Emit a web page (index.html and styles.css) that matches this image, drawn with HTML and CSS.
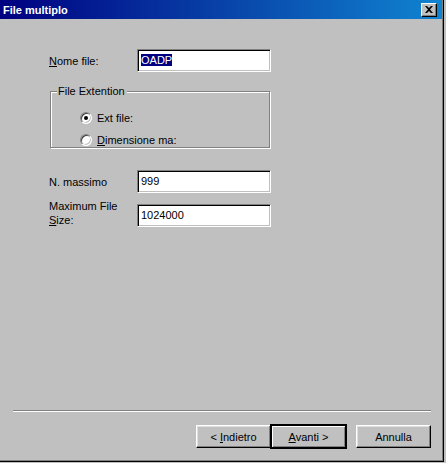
FILE: index.html
```html
<!DOCTYPE html>
<html lang="it">
<head>
    <meta charset="UTF-8">
    <title>File multiplo</title>
    <link rel="stylesheet" href="styles.css">
</head>
<body>
    <div class="window">
        <div class="titlebar">
            <span class="title">File multiplo</span>
            <span class="close-btn">
                <svg width="8" height="7" viewBox="0 0 8 7">
                    <path d="M0 0h2l2 2 2-2h2L5 3.5 8 7H6L4 5 2 7H0l3-3.5z" fill="#000"/>
                </svg>
            </span>
        </div>

        <div class="client">
            <div class="form">
                <div class="row">
                    <label class="field-label"><u>N</u>ome file:</label>
                    <div class="textbox"><span class="selected">OADP</span></div>
                </div>

                <div class="groupbox">
                    <span class="legend">File Extention</span>
                    <div class="option">
                        <span class="radio checked"></span>
                        <span>Ext file:</span>
                    </div>
                    <div class="option">
                        <span class="radio"></span>
                        <span><u>D</u>imensione ma:</span>
                    </div>
                </div>

                <div class="row row-max">
                    <label class="field-label">N. massimo</label>
                    <div class="textbox">999</div>
                </div>

                <div class="row row-size">
                    <label class="field-label">Maximum File<br><u>S</u>ize:</label>
                    <div class="textbox">1024000</div>
                </div>
            </div>

            <div class="separator"></div>

            <div class="buttons">
                <button class="btn">&lt; <u>I</u>ndietro</button>
                <button class="btn default"><u>A</u>vanti &gt;</button>
                <button class="btn cancel">Annulla</button>
            </div>
        </div>
    </div>
</body>
</html>
```

FILE: styles.css
```css
* {
    margin: 0;
    padding: 0;
    box-sizing: border-box;
}

body {
    background: #c0c0c0;
    font-family: "Liberation Sans", Arial, sans-serif;
    font-size: 11px;
    color: #000;
}

.window {
    width: 444px;
    height: 462px;
    display: flex;
    flex-direction: column;
    background: #c0c0c0;
    border-right: 1px solid #000;
    border-bottom: 1px solid #000;
    box-shadow: inset -1px -1px 0 #808080;
    margin-right: 2px;
}

.titlebar {
    height: 19px;
    display: flex;
    align-items: center;
    justify-content: space-between;
    padding: 0 5px 0 3px;
    background: linear-gradient(to right, #000080, #1084d0);
    margin-right: 1px;
}

.title {
    color: #fff;
    font-weight: bold;
    font-size: 11px;
}

.close-btn {
    width: 16px;
    height: 14px;
    display: flex;
    align-items: center;
    justify-content: center;
    background: #c0c0c0;
    border: 1px solid;
    border-color: #fff #000 #000 #fff;
    box-shadow: inset -1px -1px 0 #808080;
}

.client {
    flex: 1;
    display: flex;
    flex-direction: column;
    padding: 0 12px 13px 13px;
}

.form {
    flex: 1;
    padding: 30px 0 0 36px;
}

.row {
    display: flex;
    align-items: center;
}

.field-label {
    width: 88px;
    line-height: 14px;
}

.textbox {
    width: 134px;
    height: 23px;
    background: #fff;
    border: 1px solid;
    border-color: #808080 #fff #fff #808080;
    box-shadow: inset 1px 1px 0 #000, inset -1px -1px 0 #c0c0c0;
    padding: 4px 3px 0 3px;
    line-height: 13px;
    white-space: nowrap;
}

.selected {
    background: #000080;
    color: #fff;
}

.groupbox {
    position: relative;
    width: 220px;
    height: 57px;
    margin: 19px 0 0 1px;
    border: 1px solid #808080;
    box-shadow: inset 1px 1px 0 #fff, 1px 1px 0 #fff;
    padding: 19px 0 0 29px;
}

.legend {
    position: absolute;
    top: -7px;
    left: 6px;
    padding: 0 2px 0 1px;
    background: #c0c0c0;
    line-height: 13px;
}

.option {
    display: flex;
    align-items: center;
    gap: 5px;
    height: 14px;
    margin-bottom: 8px;
}

.radio {
    width: 12px;
    height: 12px;
    border-radius: 50%;
    background: #fff;
    border: 1px solid;
    border-color: #808080 #fff #fff #808080;
    box-shadow: inset 1px 1px 0 #404040, inset -1px -1px 0 #c0c0c0;
    display: flex;
    align-items: center;
    justify-content: center;
}

.radio.checked::after {
    content: "";
    width: 4px;
    height: 4px;
    border-radius: 50%;
    background: #000;
}

.row-max {
    margin-top: 22px;
}

.row-size {
    margin-top: 10px;
}

.row-size .field-label {
    align-self: flex-start;
    margin-top: -4px;
}

.separator {
    height: 2px;
    border-top: 1px solid #808080;
    border-bottom: 1px solid #fff;
    margin-bottom: 13px;
}

.buttons {
    display: flex;
    justify-content: flex-end;
}

.btn {
    width: 75px;
    height: 23px;
    font-family: inherit;
    font-size: 11px;
    color: #000;
    background: #c0c0c0;
    border: 1px solid;
    border-color: #fff #000 #000 #fff;
    box-shadow: inset -1px -1px 0 #808080, inset 1px 1px 0 #dfdfdf;
}

.btn.default {
    outline: 1px solid #000;
    outline-offset: 0;
    border-color: #000;
    box-shadow: inset 1px 1px 0 #fff, inset -1px -1px 0 #808080;
}

.btn.cancel {
    margin-left: 10px;
}
```
